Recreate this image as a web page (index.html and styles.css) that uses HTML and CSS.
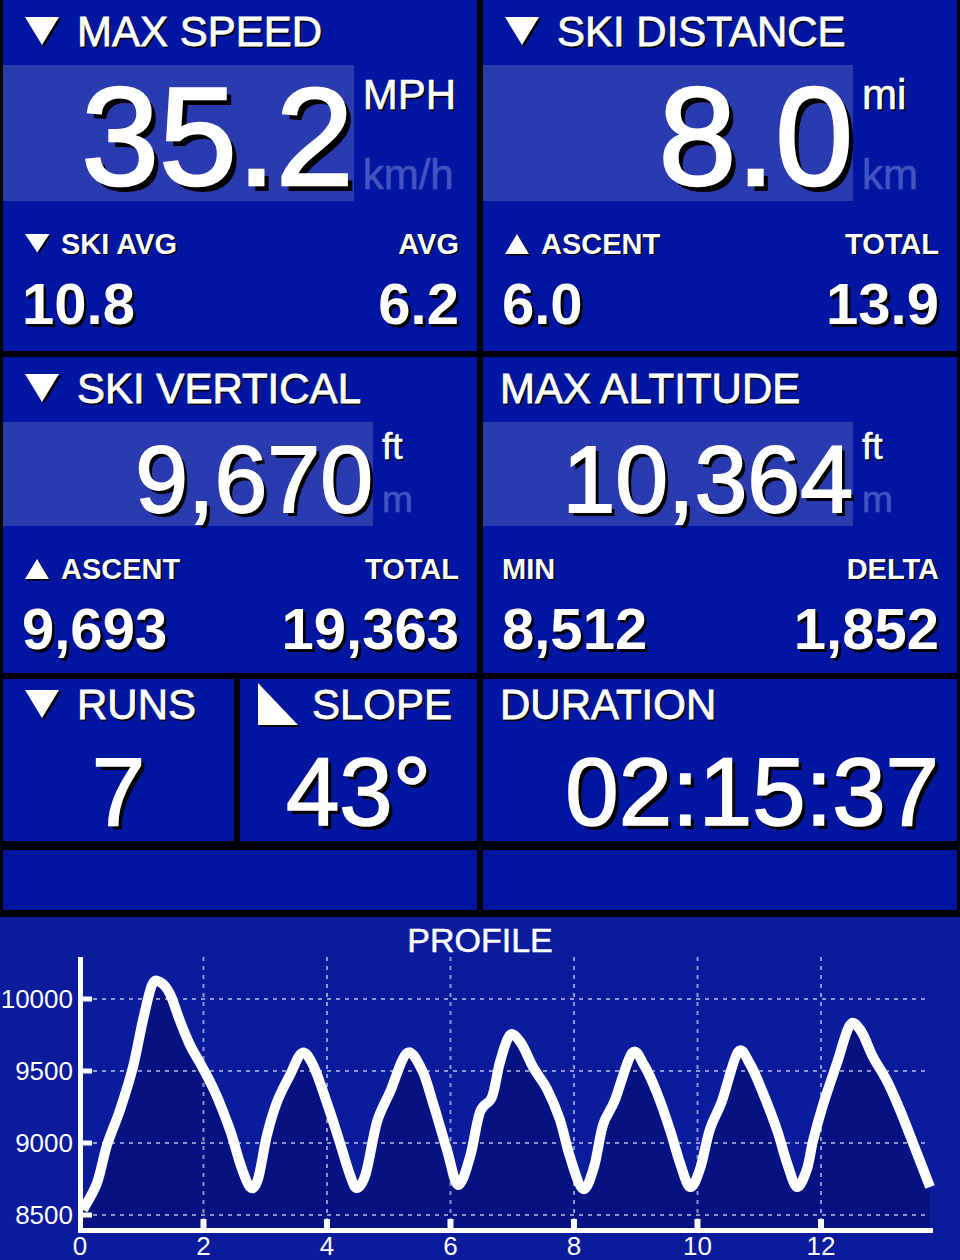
FILE: index.html
```html
<!DOCTYPE html>
<html lang="en">
<head>
    <meta charset="UTF-8">
    <meta name="viewport" content="width=device-width, initial-scale=1.0">
    <title>Ski Tracker</title>
    <link rel="stylesheet" href="styles.css">
</head>
<body>
    <main class="dash">
        <!-- speed / distance -->
        <div class="row row-large">
            <section class="panel">
                <div class="panel-title">
                    <svg class="icon-title" width="36" height="30" viewBox="0 0 36 30"><polygon class="ic-shadow" points="2,2 36,2 19,30"/><polygon class="ic-fill" points="0,0 34,0 17,28"/></svg>
                    <span>MAX SPEED</span>
                </div>
                <div class="readout">
                    <div class="readout-box"><div class="big">35.2</div></div>
                    <div class="units">
                        <span class="unit">MPH</span>
                        <span class="unit unit-alt">km/h</span>
                    </div>
                </div>
                <div class="sub">
                    <div class="sub-col">
                        <div class="sub-label">
                            <svg class="icon-sm" width="26" height="20" viewBox="0 0 26 20"><polygon class="ic-shadow" points="1.5,1.5 26,1.5 13.75,20"/><polygon class="ic-fill" points="0,0 24.5,0 12.25,18.5"/></svg>
                            <span>SKI AVG</span>
                        </div>
                        <div class="sub-value">10.8</div>
                    </div>
                    <div class="sub-col right">
                        <div class="sub-label">AVG</div>
                        <div class="sub-value">6.2</div>
                    </div>
                </div>
            </section>
            <section class="panel">
                <div class="panel-title">
                    <svg class="icon-title" width="36" height="30" viewBox="0 0 36 30"><polygon class="ic-shadow" points="2,2 36,2 19,30"/><polygon class="ic-fill" points="0,0 34,0 17,28"/></svg>
                    <span>SKI DISTANCE</span>
                </div>
                <div class="readout">
                    <div class="readout-box"><div class="big">8.0</div></div>
                    <div class="units">
                        <span class="unit">mi</span>
                        <span class="unit unit-alt">km</span>
                    </div>
                </div>
                <div class="sub">
                    <div class="sub-col">
                        <div class="sub-label">
                            <svg class="icon-sm" width="26" height="22" viewBox="0 0 26 22"><polygon class="ic-shadow" points="13.5,1.5 25.5,21.5 1.5,21.5"/><polygon class="ic-fill" points="12,0 24,20 0,20"/></svg>
                            <span>ASCENT</span>
                        </div>
                        <div class="sub-value">6.0</div>
                    </div>
                    <div class="sub-col right">
                        <div class="sub-label">TOTAL</div>
                        <div class="sub-value">13.9</div>
                    </div>
                </div>
            </section>
        </div>

        <!-- vertical / altitude -->
        <div class="row row-medium">
            <section class="panel">
                <div class="panel-title">
                    <svg class="icon-title" width="36" height="30" viewBox="0 0 36 30"><polygon class="ic-shadow" points="2,2 36,2 19,30"/><polygon class="ic-fill" points="0,0 34,0 17,28"/></svg>
                    <span>SKI VERTICAL</span>
                </div>
                <div class="readout readout-sm">
                    <div class="readout-box"><div class="big">9,670</div></div>
                    <div class="units">
                        <span class="unit">ft</span>
                        <span class="unit unit-alt">m</span>
                    </div>
                </div>
                <div class="sub">
                    <div class="sub-col">
                        <div class="sub-label">
                            <svg class="icon-sm" width="26" height="22" viewBox="0 0 26 22"><polygon class="ic-shadow" points="13.5,1.5 25.5,21.5 1.5,21.5"/><polygon class="ic-fill" points="12,0 24,20 0,20"/></svg>
                            <span>ASCENT</span>
                        </div>
                        <div class="sub-value">9,693</div>
                    </div>
                    <div class="sub-col right">
                        <div class="sub-label">TOTAL</div>
                        <div class="sub-value">19,363</div>
                    </div>
                </div>
            </section>
            <section class="panel">
                <div class="panel-title plain">
                    <span>MAX ALTITUDE</span>
                </div>
                <div class="readout readout-sm">
                    <div class="readout-box"><div class="big">10,364</div></div>
                    <div class="units">
                        <span class="unit">ft</span>
                        <span class="unit unit-alt">m</span>
                    </div>
                </div>
                <div class="sub">
                    <div class="sub-col">
                        <div class="sub-label">MIN</div>
                        <div class="sub-value">8,512</div>
                    </div>
                    <div class="sub-col right">
                        <div class="sub-label">DELTA</div>
                        <div class="sub-value">1,852</div>
                    </div>
                </div>
            </section>
        </div>

        <!-- runs / slope / duration -->
        <div class="row row-small">
            <div class="pair">
                <section class="panel panel-compact">
                    <div class="panel-title">
                        <svg class="icon-title" width="36" height="30" viewBox="0 0 36 30"><polygon class="ic-shadow" points="2,2 36,2 19,30"/><polygon class="ic-fill" points="0,0 34,0 17,28"/></svg>
                        <span>RUNS</span>
                    </div>
                    <div class="mid center">7</div>
                </section>
                <section class="panel panel-compact panel-slope">
                    <div class="panel-title">
                        <svg class="icon-slope" width="43" height="45" viewBox="0 0 43 45"><polygon class="ic-shadow" points="2,2 2,44 42,44"/><polygon class="ic-fill" points="0,0 0,42 40,42"/></svg>
                        <span>SLOPE</span>
                    </div>
                    <div class="mid center">43°</div>
                </section>
            </div>
            <section class="panel panel-compact">
                <div class="panel-title plain">
                    <span>DURATION</span>
                </div>
                <div class="mid right">02:15:37</div>
            </section>
        </div>

        <div class="row row-blank">
            <section class="panel"></section>
            <section class="panel"></section>
        </div>

        <!-- elevation profile -->
        <section class="profile">
            <svg class="chart" width="960" height="343" viewBox="0 0 960 343">
                <text class="chart-title" x="480" y="35" text-anchor="middle">PROFILE</text>

                <path id="profileArea" class="area" d=""/>

                <g class="grid">
                    <line x1="84" y1="82" x2="930" y2="82"/>
                    <line x1="84" y1="154" x2="930" y2="154"/>
                    <line x1="84" y1="226" x2="930" y2="226"/>
                    <line x1="84" y1="298" x2="930" y2="298"/>
                    <line x1="203.5" y1="40" x2="203.5" y2="311"/>
                    <line x1="327" y1="40" x2="327" y2="311"/>
                    <line x1="450.5" y1="40" x2="450.5" y2="311"/>
                    <line x1="574" y1="40" x2="574" y2="311"/>
                    <line x1="697.5" y1="40" x2="697.5" y2="311"/>
                    <line x1="821" y1="40" x2="821" y2="311"/>
                </g>

                <path id="profileTrace" class="trace" d=""/>

                <g class="axis">
                    <line x1="80.5" y1="40" x2="80.5" y2="316"/>
                    <line x1="78" y1="313.5" x2="933" y2="313.5"/>
                    <line x1="80" y1="82" x2="92" y2="82"/>
                    <line x1="80" y1="154" x2="92" y2="154"/>
                    <line x1="80" y1="226" x2="92" y2="226"/>
                    <line x1="80" y1="298" x2="92" y2="298"/>
                    <line class="tick-x" x1="203.5" y1="302" x2="203.5" y2="313"/>
                    <line class="tick-x" x1="327" y1="302" x2="327" y2="313"/>
                    <line class="tick-x" x1="450.5" y1="302" x2="450.5" y2="313"/>
                    <line class="tick-x" x1="574" y1="302" x2="574" y2="313"/>
                    <line class="tick-x" x1="697.5" y1="302" x2="697.5" y2="313"/>
                    <line class="tick-x" x1="821" y1="302" x2="821" y2="313"/>
                </g>

                <g class="labels-y" text-anchor="end">
                    <text x="73" y="91">10000</text>
                    <text x="73" y="163">9500</text>
                    <text x="73" y="235">9000</text>
                    <text x="73" y="307">8500</text>
                </g>
                <g class="labels-x" text-anchor="middle">
                    <text x="80" y="338">0</text>
                    <text x="203.5" y="338">2</text>
                    <text x="327" y="338">4</text>
                    <text x="450.5" y="338">6</text>
                    <text x="574" y="338">8</text>
                    <text x="697.5" y="338">10</text>
                    <text x="821" y="338">12</text>
                </g>
            </svg>
        </section>
    </main>

    <script>
        // elevation samples in chart pixels (x, y)
        const profile = [
            [83, 293], [97, 266], [107, 228], [120, 193], [133, 150], [143, 103], [152, 68], [160, 65], [170, 77],
            [180, 104], [190, 128], [200, 146], [215, 175], [230, 213], [240, 246], [250, 270], [258, 262],
            [267, 218], [277, 185], [290, 158], [302, 136], [313, 148], [327, 186], [340, 226], [350, 258],
            [357, 271], [366, 256], [377, 205], [390, 175], [407, 136], [422, 153], [433, 186], [447, 233],
            [458, 268], [470, 240], [480, 195], [492, 180], [500, 145], [510, 118], [521, 126], [533, 150],
            [547, 172], [560, 203], [570, 240], [583, 272], [594, 250], [603, 208], [615, 183], [632, 136],
            [644, 148], [657, 176], [670, 213], [680, 246], [690, 270], [700, 252], [710, 212], [722, 184],
            [738, 135], [750, 147], [763, 176], [777, 213], [787, 246], [797, 270], [807, 252], [813, 224],
            [823, 188], [837, 146], [850, 108], [861, 114], [873, 140], [887, 164], [900, 193], [913, 226],
            [930, 270]
        ];

        function smoothPath(pts) {
            let d = `M${pts[0][0]},${pts[0][1]}`;
            for (let i = 0; i < pts.length - 1; i++) {
                const p0 = pts[i - 1] || pts[i];
                const p1 = pts[i];
                const p2 = pts[i + 1];
                const p3 = pts[i + 2] || p2;
                const c1x = p1[0] + (p2[0] - p0[0]) / 6;
                const c1y = p1[1] + (p2[1] - p0[1]) / 6;
                const c2x = p2[0] - (p3[0] - p1[0]) / 6;
                const c2y = p2[1] - (p3[1] - p1[1]) / 6;
                d += ` C${c1x.toFixed(1)},${c1y.toFixed(1)} ${c2x.toFixed(1)},${c2y.toFixed(1)} ${p2[0]},${p2[1]}`;
            }
            return d;
        }

        const trace = smoothPath(profile);
        const first = profile[0];
        const last = profile[profile.length - 1];

        document.getElementById('profileTrace').setAttribute('d', trace);
        document.getElementById('profileArea').setAttribute('d', `${trace} L${last[0]},311 L${first[0]},311 Z`);
    </script>
</body>
</html>
```

FILE: styles.css
```css
* {
    box-sizing: border-box;
}

body {
    margin: 0;
    background-color: #000;
    font-family: 'Liberation Sans', Arial, Helvetica, sans-serif;
    color: #fff;
}

.dash {
    width: 960px;
    height: 1260px;
    overflow: hidden;
}

/* rows of panels */
.row {
    display: flex;
    gap: 6px;
    padding: 0 3px;
    margin-bottom: 6px;
}

.row-large {
    height: 351px;
}

.row-medium {
    height: 316px;
}

.row-small {
    height: 162px;
    margin-bottom: 9px;
}

.row-blank {
    height: 60px;
    margin-bottom: 7px;
}

.panel {
    flex: 1;
    min-width: 0;
    background-color: #0116a0;
}

.pair {
    flex: 1;
    display: flex;
    gap: 6px;
}

.pair .panel:first-child {
    flex: 0 0 231px;
}

/* icons */
.ic-fill {
    fill: #fff;
}

.ic-shadow {
    fill: #000;
}

/* panel title */
.panel-title {
    display: flex;
    align-items: flex-start;
    gap: 16px;
    height: 65px;
    padding: 11px 18px 0 22px;
    font-size: 42px;
    line-height: 42px;
    white-space: nowrap;
    text-shadow: 0.04em 0.045em 0 #000;
    -webkit-text-stroke: 0.8px #fff;
}

.panel-title.plain {
    padding-left: 17px;
}

.panel-title svg {
    flex: none;
    margin-top: 6px;
}

.panel-compact .panel-title {
    height: 47px;
    padding-top: 5px;
}

.panel-slope .panel-title {
    gap: 11px;
    padding-left: 18px;
}

.panel-slope .panel-title svg {
    margin-top: -1px;
}

/* big readout with unit column */
.readout {
    display: flex;
    height: 136px;
}

.readout-box {
    flex: 1;
    background-color: #2a3bb0;
    text-align: right;
}

.big {
    font-size: 140px;
    line-height: 120px;
    padding-top: 12px;
    white-space: nowrap;
    text-shadow: 0.04em 0.045em 0 #000;
    -webkit-text-stroke: 2.6px #fff;
}

.units {
    display: flex;
    flex-direction: column;
    justify-content: space-between;
    min-width: 104px;
    padding: 9px 21px 5px 9px;
    font-size: 42px;
    line-height: 42px;
}

.unit {
    text-shadow: 0.04em 0.045em 0 #000;
    -webkit-text-stroke: 0.6px #fff;
}

.unit-alt {
    color: #4254c0;
    text-shadow: none;
    -webkit-text-stroke: 0.6px #4254c0;
}

.readout-sm {
    height: 104px;
}

.readout-sm .big {
    font-size: 95px;
    line-height: 90px;
    padding-top: 12px;
    -webkit-text-stroke: 1.8px #fff;
}

.readout-sm .units {
    padding: 6px 22px 8px 9px;
    font-size: 37px;
    line-height: 37px;
}

/* secondary stats */
.sub {
    display: flex;
    justify-content: space-between;
    padding: 0 18px 0 19px;
    margin-top: 29px;
}

.sub-label {
    display: flex;
    align-items: flex-start;
    gap: 10px;
    font-size: 29px;
    line-height: 29px;
    font-weight: bold;
    text-shadow: 0.05em 0.05em 0 #000;
}

.sub-label svg {
    flex: none;
    margin-top: 4px;
    margin-left: 3px;
}

.sub-value {
    margin-top: 16px;
    font-size: 58px;
    line-height: 58px;
    font-weight: bold;
    text-shadow: 0.045em 0.045em 0 #000;
}

.sub-col.right {
    text-align: right;
}

.sub-col.right .sub-label {
    justify-content: flex-end;
}

/* compact panels */
.mid {
    margin-top: 18px;
    font-size: 96px;
    line-height: 96px;
    white-space: nowrap;
    text-shadow: 0.04em 0.045em 0 #000;
    -webkit-text-stroke: 1.6px #fff;
}

.mid.center {
    text-align: center;
}

.mid.right {
    text-align: right;
    padding-right: 18px;
}

/* profile chart */
.profile {
    height: 343px;
    background-color: #0a1b9c;
}

.chart {
    display: block;
    font-family: 'Liberation Sans', Arial, Helvetica, sans-serif;
}

.chart-title {
    fill: #fff;
    stroke: #fff;
    stroke-width: 0.5;
    font-size: 34px;
}

.area {
    fill: #061281;
}

.grid line {
    stroke: rgba(255, 255, 255, 0.55);
    stroke-width: 2;
    stroke-dasharray: 4 5;
}

.trace {
    fill: none;
    stroke: #fff;
    stroke-width: 10;
    stroke-linejoin: round;
}

.axis line {
    stroke: #fff;
    stroke-width: 5;
}

.axis .tick-x {
    stroke-width: 6;
}

.labels-y text,
.labels-x text {
    fill: #fff;
    font-size: 26px;
}
```
